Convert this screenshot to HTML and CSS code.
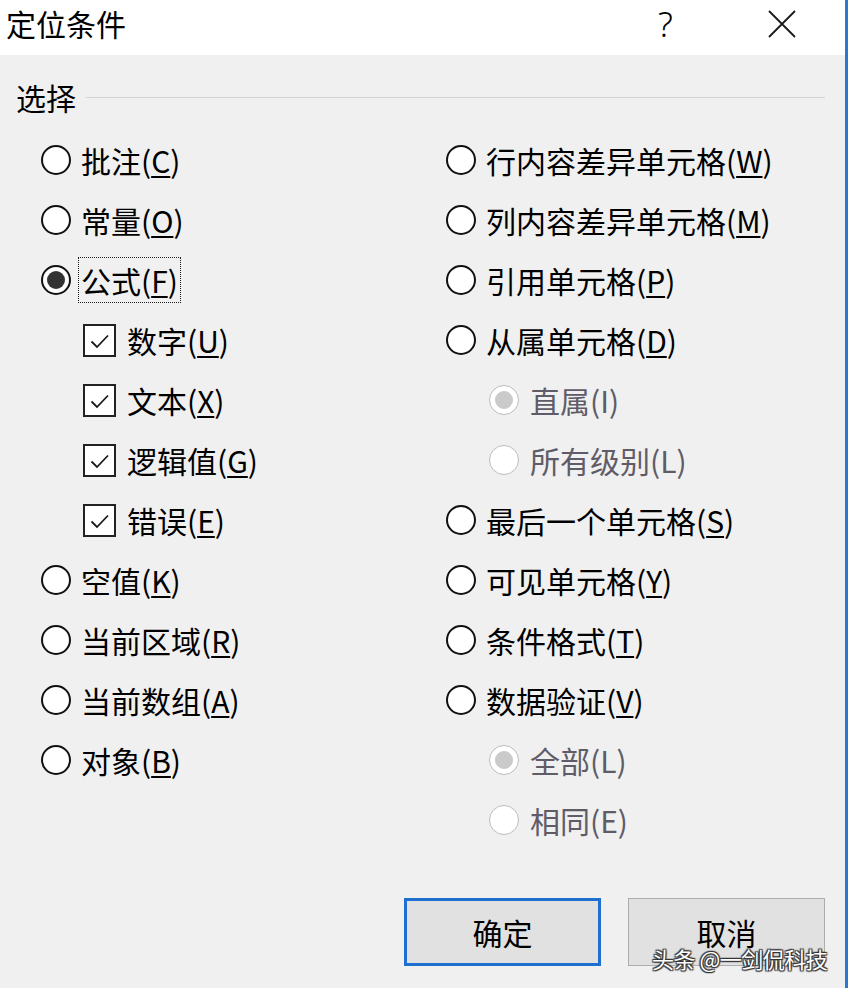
FILE: index.html
```html
<!DOCTYPE html>
<html lang="zh-CN">
<head>
<meta charset="utf-8">
<title>定位条件</title>
<link rel="stylesheet" href="styles.css">
</head>
<body>
<div class="dialog">
  <div class="titlebar">
    <span class="title">定位条件</span>
    <span class="help">?</span>
    <svg class="close" width="28" height="28" viewBox="0 0 28 28"><path d="M1 1 L27 27 M27 1 L1 27" stroke="#1a1a1a" stroke-width="1.8" fill="none"/></svg>
  </div>
  <div class="content">
    <div class="legend"><span class="legend-text">选择</span><span class="legend-line"></span></div>
    <div class="options">
      <div class="col col-left">
        <div class="row"><span class="radio"></span><span class="lbl">批注(<u>C</u>)</span></div>
        <div class="row"><span class="radio"></span><span class="lbl">常量(<u>O</u>)</span></div>
        <div class="row"><span class="radio checked"></span><span class="lbl focus">公式(<u>F</u>)</span></div>
        <div class="row sub"><span class="check"><svg width="27" height="27" viewBox="0 0 27 27"><path d="M5.5 14.5 L11 20 L22 8.5" stroke="#1a1a1a" stroke-width="1.8" fill="none"/></svg></span><span class="lbl">数字(<u>U</u>)</span></div>
        <div class="row sub"><span class="check"><svg width="27" height="27" viewBox="0 0 27 27"><path d="M5.5 14.5 L11 20 L22 8.5" stroke="#1a1a1a" stroke-width="1.8" fill="none"/></svg></span><span class="lbl">文本(<u>X</u>)</span></div>
        <div class="row sub"><span class="check"><svg width="27" height="27" viewBox="0 0 27 27"><path d="M5.5 14.5 L11 20 L22 8.5" stroke="#1a1a1a" stroke-width="1.8" fill="none"/></svg></span><span class="lbl">逻辑值(<u>G</u>)</span></div>
        <div class="row sub"><span class="check"><svg width="27" height="27" viewBox="0 0 27 27"><path d="M5.5 14.5 L11 20 L22 8.5" stroke="#1a1a1a" stroke-width="1.8" fill="none"/></svg></span><span class="lbl">错误(<u>E</u>)</span></div>
        <div class="row"><span class="radio"></span><span class="lbl">空值(<u>K</u>)</span></div>
        <div class="row"><span class="radio"></span><span class="lbl">当前区域(<u>R</u>)</span></div>
        <div class="row"><span class="radio"></span><span class="lbl">当前数组(<u>A</u>)</span></div>
        <div class="row"><span class="radio"></span><span class="lbl">对象(<u>B</u>)</span></div>
      </div>
      <div class="col col-right">
        <div class="row"><span class="radio"></span><span class="lbl">行内容差异单元格(<u>W</u>)</span></div>
        <div class="row"><span class="radio"></span><span class="lbl">列内容差异单元格(<u>M</u>)</span></div>
        <div class="row"><span class="radio"></span><span class="lbl">引用单元格(<u>P</u>)</span></div>
        <div class="row"><span class="radio"></span><span class="lbl">从属单元格(<u>D</u>)</span></div>
        <div class="row sub disabled"><span class="radio checked"></span><span class="lbl">直属(I)</span></div>
        <div class="row sub disabled"><span class="radio"></span><span class="lbl">所有级别(L)</span></div>
        <div class="row"><span class="radio"></span><span class="lbl">最后一个单元格(<u>S</u>)</span></div>
        <div class="row"><span class="radio"></span><span class="lbl">可见单元格(<u>Y</u>)</span></div>
        <div class="row"><span class="radio"></span><span class="lbl">条件格式(<u>T</u>)</span></div>
        <div class="row"><span class="radio"></span><span class="lbl">数据验证(<u>V</u>)</span></div>
        <div class="row sub disabled"><span class="radio checked"></span><span class="lbl">全部(L)</span></div>
        <div class="row sub disabled"><span class="radio"></span><span class="lbl">相同(E)</span></div>
      </div>
    </div>
    <div class="buttons">
      <div class="btn btn-default">确定</div>
      <div class="btn btn-cancel">取消</div>
    </div>
    <div class="watermark">头条 @一剑侃科技</div>
  </div>
</div>
</body>
</html>
```

FILE: styles.css
```css
html, body {
  margin: 0;
  padding: 0;
  background: #f0f0f0;
}
body {
  font-family: "Noto Sans CJK SC", "Noto Sans", sans-serif;
  color: #000;
}
.dialog {
  width: 845px;
  height: 988px;
  border-right: 3px solid #2a78d2;
  display: flex;
  flex-direction: column;
  background: #f0f0f0;
  position: relative;
}
.titlebar {
  height: 55px;
  background: #fff;
  display: flex;
  align-items: flex-start;
  padding-left: 6px;
  box-sizing: border-box;
  flex-shrink: 0;
}
.title {
  font-size: 30px;
  line-height: 30px;
  margin-top: 8px;
  width: 652px;
}
.help {
  font-family: "Noto Sans", sans-serif;
  font-weight: 300;
  font-size: 35px;
  line-height: 48px;
  height: 48px;
  margin-top: 0;
  width: 110px;
}
.close {
  display: block;
  margin-top: 10px;
}
.content {
  flex: 1;
  display: flex;
  flex-direction: column;
  padding: 27px 0 0 0;
}
.legend {
  display: flex;
  align-items: center;
  height: 30px;
  padding-left: 16px;
  padding-right: 20px;
}
.legend-text {
  font-size: 30px;
  line-height: 30px;
}
.legend-line {
  flex: 1;
  height: 1px;
  background: #d2d2d2;
  margin-left: 10px;
}
.options {
  display: flex;
  margin-top: 18px;
  padding-left: 41px;
}
.col {
  display: flex;
  flex-direction: column;
}
.col-left {
  width: 405px;
}
.row {
  height: 60px;
  display: flex;
  align-items: center;
}
.lbl {
  font-size: 30px;
  line-height: 30px;
  padding: 7px 2px;
  border: 1px dotted transparent;
  margin-left: 7px;
  white-space: nowrap;
}
.lbl u {
  text-decoration-thickness: 2px;
  text-underline-offset: 3px;
}
.lbl.focus {
  border-color: #1a1a1a;
}
.radio {
  width: 26px;
  height: 26px;
  border: 2px solid #111;
  border-radius: 50%;
  background: #fff;
  display: flex;
  align-items: center;
  justify-content: center;
  flex-shrink: 0;
}
.radio.checked::after {
  content: "";
  width: 18px;
  height: 18px;
  border-radius: 50%;
  background: #333;
}
.row.sub {
  padding-left: 43px;
}
.col-left .row.sub {
  padding-left: 42px;
}
.check {
  width: 29px;
  height: 29px;
  border: 2px solid #222;
  background: #fff;
  display: flex;
  align-items: center;
  justify-content: center;
  flex-shrink: 0;
}
.check svg {
  display: block;
}
.row.sub .lbl {
  margin-left: 8px;
}
.disabled .radio {
  border: 1.5px solid #bdbdbd;
  width: 28px;
  height: 28px;
}
.disabled .radio.checked::after {
  background: #cacaca;
}
.disabled .lbl {
  color: #5f5c68;
}
.buttons {
  margin-top: auto;
  display: flex;
  justify-content: flex-end;
  gap: 27px;
  padding-right: 20px;
  padding-bottom: 22px;
}
.btn {
  width: 195px;
  height: 66px;
  border: 1px solid #adadad;
  background: #e1e1e1;
  display: flex;
  align-items: center;
  justify-content: center;
  font-size: 30px;
  line-height: 30px;
}
.btn-cancel {
  align-items: flex-start;
  padding-top: 18px;
  box-sizing: border-box;
  height: 68px;
  width: 197px;
}
.btn-default {
  width: 191px;
  height: 62px;
  border: 3px solid #1f6fd1;
}
.watermark {
  position: absolute;
  left: 652px;
  top: 945px;
  font-size: 22px;
  line-height: 26px;
  color: #fff;
  text-shadow: 0 0 2px #333, 1px 1px 1px #333, -1px -1px 1px #333, 1px -1px 1px #333, -1px 1px 1px #333;
  letter-spacing: -0.5px;
}
```
